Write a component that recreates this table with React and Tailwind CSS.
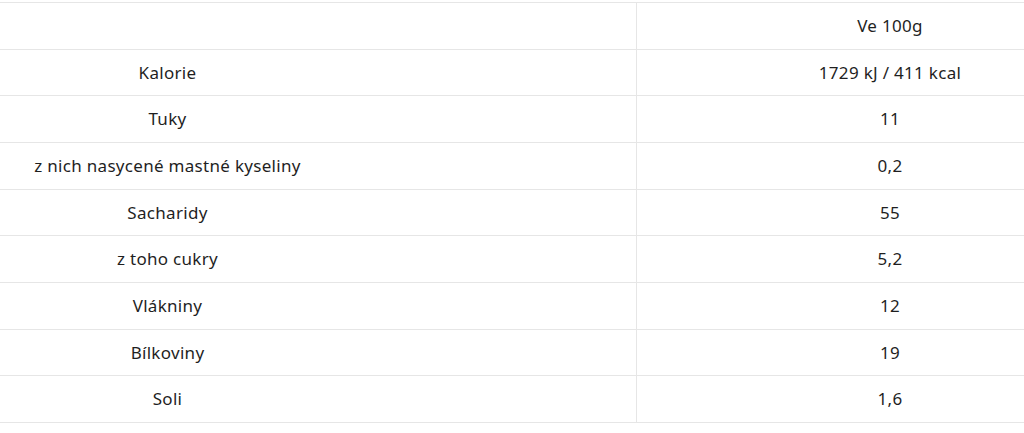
import React from "react";

const rows = [
  ["", "Ve 100g"],
  ["Kalorie", "1729 kJ / 411 kcal"],
  ["Tuky", "11"],
  ["z nich nasycené mastné kyseliny", "0,2"],
  ["Sacharidy", "55"],
  ["z toho cukry", "5,2"],
  ["Vlákniny", "12"],
  ["Bílkoviny", "19"],
  ["Soli", "1,6"],
];

export default function App() {
  return (
    <div
      className="w-[1024px] h-[433px] bg-white overflow-hidden pt-[2px]"
      style={{ fontFamily: '"Noto Sans", "Open Sans", sans-serif' }}
    >
      <div className="border-b border-[#e6e6e6]">
        {rows.map(([a, b], i) => (
          <div
            key={i}
            className="grid grid-cols-[637px_1fr] h-[46.67px] border-t border-[#e6e6e6] text-[17px] tracking-[0.3px] text-[#1f1f1f]"
          >
            <div className="flex items-center justify-center pr-[301px] border-r border-[#e6e6e6] whitespace-nowrap">
              {a}
            </div>
            <div className="flex items-center justify-center pl-[119px] whitespace-nowrap">
              {b}
            </div>
          </div>
        ))}
      </div>
    </div>
  );
}
